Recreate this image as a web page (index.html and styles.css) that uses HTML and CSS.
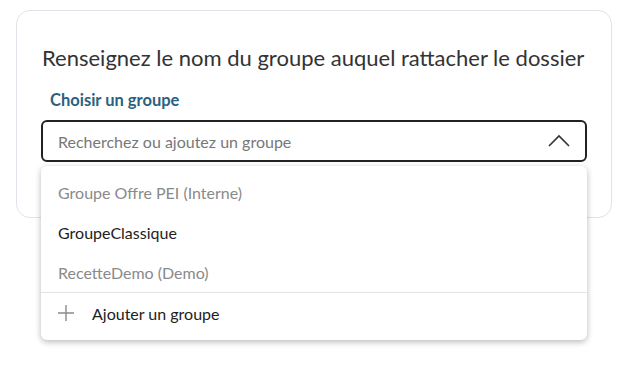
FILE: index.html
```html
<!DOCTYPE html>
<html lang="fr">
<head>
    <meta charset="UTF-8">
    <meta name="viewport" content="width=device-width, initial-scale=1.0">
    <link rel="stylesheet" href="styles.css">
    <title>Choisir un groupe</title>
</head>
<body>

    <div class="page">
        <div class="card">
            <h2 class="card-title">Renseignez le nom du groupe auquel rattacher le dossier</h2>
            <label class="field-label" for="group">Choisir un groupe</label>

            <div class="combo">
                <div class="combo-input">
                    <input id="group" type="text" placeholder="Recherchez ou ajoutez un groupe">
                    <svg class="chevron" width="22" height="13" viewBox="0 0 22 13">
                        <path d="M1 12 L11 2 L21 12" fill="none" stroke="#333" stroke-width="1.6"/>
                    </svg>
                </div>

                <ul class="menu">
                    <li class="option muted">Groupe Offre PEI (Interne)</li>
                    <li class="option">GroupeClassique</li>
                    <li class="option muted">RecetteDemo (Demo)</li>
                    <li class="option add">
                        <svg class="plus" width="16" height="16" viewBox="0 0 16 16">
                            <path d="M8 0 V16 M0 8 H16" stroke="#8a8a8a" stroke-width="1.4"/>
                        </svg>
                        Ajouter un groupe
                    </li>
                </ul>
            </div>
        </div>
    </div>

</body>
</html>
```

FILE: styles.css
```css
html, body {
    min-height: 100vh;
}

body {
    margin: 0;
    font-family: Lato, "Liberation Sans", sans-serif;
    background: #fff;
    color: #222;
}

.page {
    padding: 10px 24px 0 16px;
    min-height: 365px;
    box-sizing: border-box;
}

.card {
    width: 596px;
    box-sizing: border-box;
    border: 1px solid #e2e3ea;
    border-radius: 14px;
    padding: 34px 24px 55px 24px;
}

.card-title {
    margin: 0 0 19px 0;
    font-size: 22px;
    line-height: 26px;
    font-weight: 400;
    color: #333;
    padding-left: 1px;
    white-space: nowrap;
}

.field-label {
    display: block;
    margin: 0 0 10px 9px;
    font-size: 16.5px;
    line-height: 20px;
    font-weight: 700;
    color: #2b6180;
}

.combo {
    position: relative;
}

.combo-input {
    display: flex;
    align-items: center;
    height: 42px;
    box-sizing: border-box;
    border: 2px solid #222;
    border-radius: 6px;
    padding: 0 15px 0 15px;
}

.combo-input input {
    flex: 1;
    border: none;
    outline: none;
    font-family: inherit;
    font-size: 16px;
    color: #222;
    padding: 0;
    background: transparent;
}

.combo-input input::placeholder {
    color: #777;
}

.chevron {
    margin-top: -2px;
}

/* liste déroulante, par-dessus la carte */
.menu {
    position: absolute;
    top: 46px;
    left: 0;
    right: 0;
    z-index: 2;
    margin: 0;
    padding: 6px 0 7px 0;
    list-style: none;
    background: #fff;
    border-radius: 6px;
    box-shadow: 0 2px 6px rgba(0, 0, 0, 0.28);
}

.option {
    height: 40px;
    display: flex;
    align-items: center;
    padding-left: 17px;
    font-size: 16px;
    color: #222;
}

.option.muted {
    color: #8a8a8a;
}

.option.add {
    border-top: 1px solid #e2e2e2;
    gap: 18px;
}
```
